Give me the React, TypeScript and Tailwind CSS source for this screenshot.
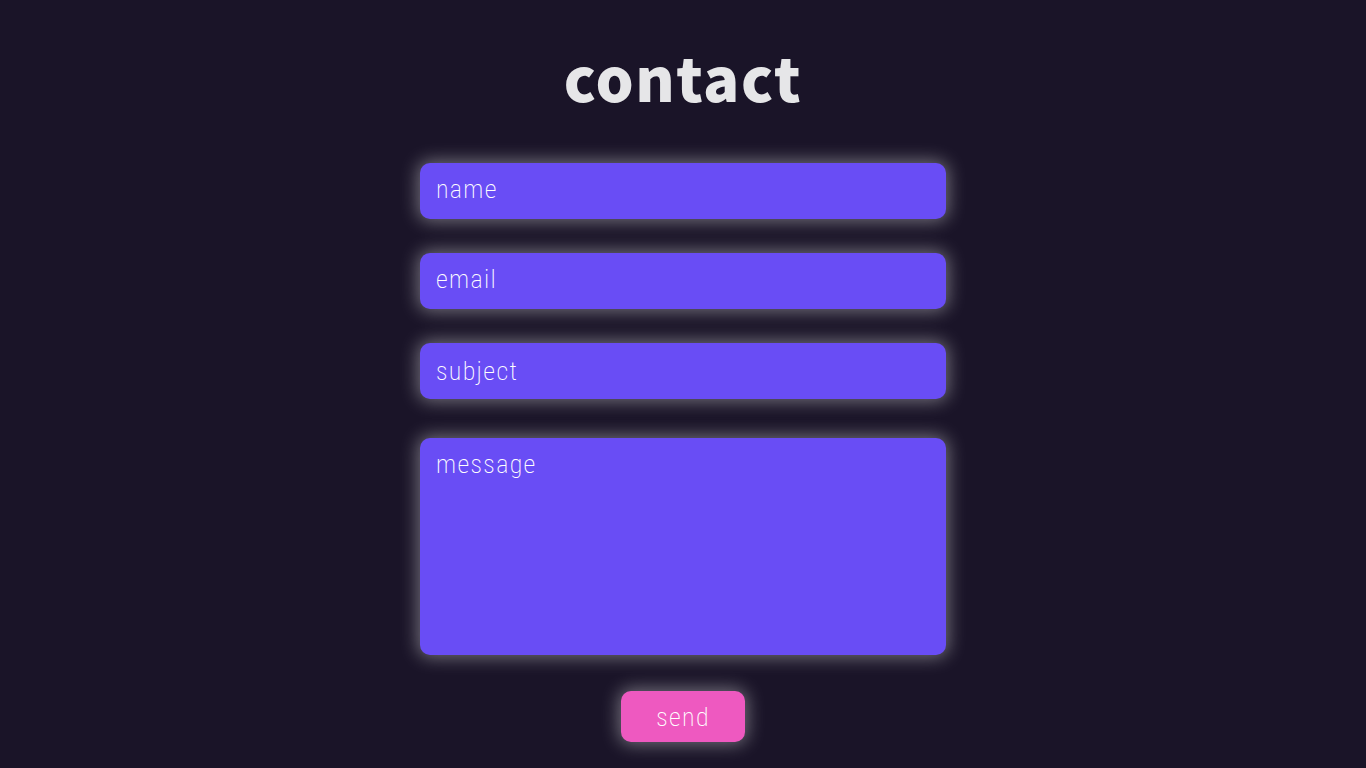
import React from "react";

const field =
  "block w-full rounded-[10px] bg-[#694df5] px-4 font-['Roboto_Condensed','Roboto',sans-serif] text-[26px] font-extralight leading-8 tracking-wider text-white placeholder:text-white placeholder:opacity-100 shadow-[0_0_18px_2px_rgba(230,230,230,0.45)] outline-none";

export default function App() {
  return (
    <main className="flex min-h-screen flex-col items-center bg-[#1a1428] px-6 pt-9 pb-6">
      <h1 className="font-['Noto_Sans_CJK_SC',sans-serif] text-[60px] leading-20 font-black tracking-wide text-[#e6e6e8]">contact</h1>
      <form className="mt-[47px] flex w-full max-w-[526px] flex-col items-center" onSubmit={(e) => e.preventDefault()}>
        <input aria-label="name" name="name" placeholder="name" className={`${field} h-14 pb-1`} />
        <input aria-label="email" name="email" type="email" placeholder="email" className={`${field} mt-[34px] h-14 pb-1`} />
        <input aria-label="subject" name="subject" placeholder="subject" className={`${field} mt-[34px] h-14`} />
        <textarea aria-label="message" name="message" placeholder="message" className={`${field} mt-[39px] h-[217px] resize-none pt-[10px]`} />
        <button
          type="submit"
          className="mt-9 h-[51px] w-[124px] rounded-[10px] bg-[#ee59c0] font-['Roboto_Condensed','Roboto',sans-serif] text-[26px] leading-8 font-extralight tracking-wider text-white shadow-[0_0_18px_2px_rgba(230,230,230,0.45)]"
        >
          send
        </button>
      </form>
    </main>
  );
}
